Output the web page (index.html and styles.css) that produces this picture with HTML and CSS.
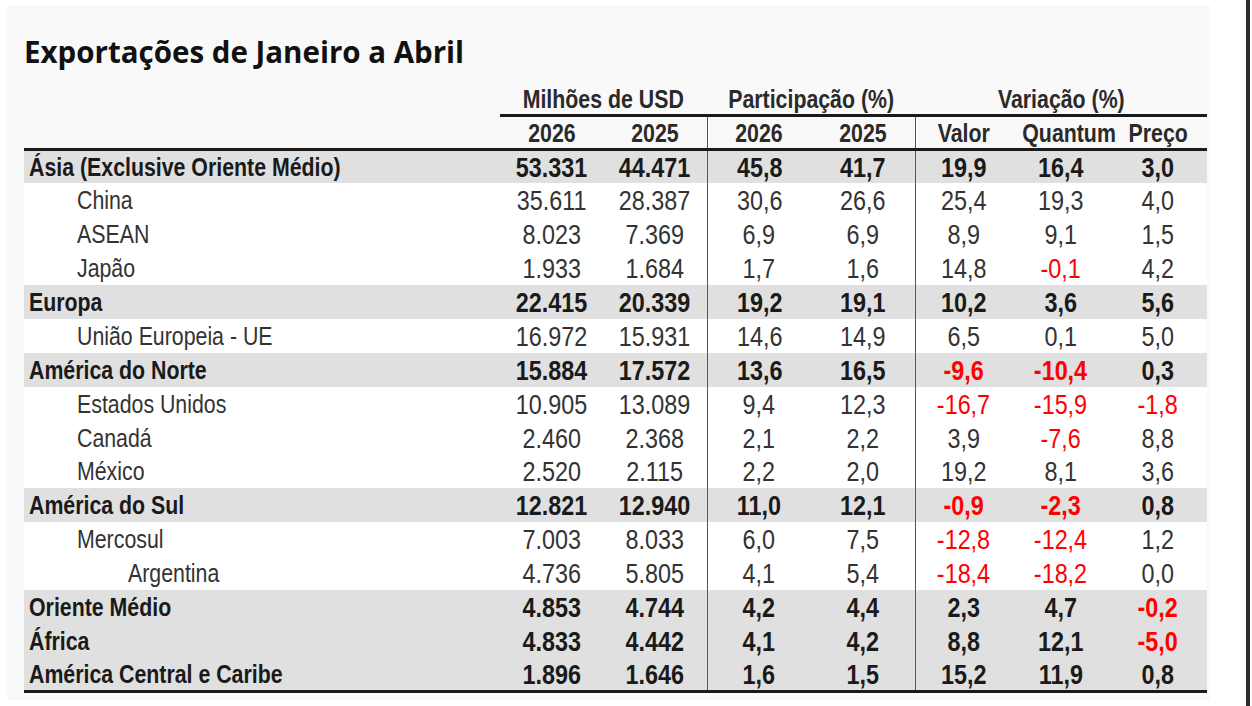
FILE: index.html
```html
<!DOCTYPE html>
<html lang="pt-BR">
<head>
<meta charset="utf-8">
<title>Exportações de Janeiro a Abril</title>
<link rel="stylesheet" href="styles.css">
</head>
<body>
<div class="screen">
  <div class="panel">
    <h1 class="title">Exportações de Janeiro a Abril</h1>
    <table class="data">
      <colgroup>
        <col class="c-label">
        <col class="c-m"><col class="c-m">
        <col class="c-p"><col class="c-p">
        <col class="c-v"><col class="c-v"><col class="c-v3">
      </colgroup>
      <thead>
        <tr class="grp-row">
          <th class="blank"></th>
          <th colspan="2" class="grp"><span>Milhões de USD</span></th>
          <th colspan="2" class="grp"><span>Participação (%)</span></th>
          <th colspan="3" class="grp"><span>Variação (%)</span></th>
        </tr>
        <tr class="sub-row">
          <th class="blank"></th>
          <th><span>2026</span></th><th><span>2025</span></th>
          <th class="sep"><span>2026</span></th><th><span>2025</span></th>
          <th class="sep"><span>Valor</span></th><th><span>Quantum</span></th><th><span>Preço</span></th>
        </tr>
      </thead>
      <tbody>
        <tr class="region"><td class="lbl"><span>Ásia (Exclusive Oriente Médio)</span></td><td><span>53.331</span></td><td><span>44.471</span></td><td class="sep"><span>45,8</span></td><td><span>41,7</span></td><td class="sep"><span>19,9</span></td><td><span>16,4</span></td><td><span>3,0</span></td></tr>
        <tr class="item"><td class="lbl l1"><span>China</span></td><td><span>35.611</span></td><td><span>28.387</span></td><td class="sep"><span>30,6</span></td><td><span>26,6</span></td><td class="sep"><span>25,4</span></td><td><span>19,3</span></td><td><span>4,0</span></td></tr>
        <tr class="item"><td class="lbl l1"><span>ASEAN</span></td><td><span>8.023</span></td><td><span>7.369</span></td><td class="sep"><span>6,9</span></td><td><span>6,9</span></td><td class="sep"><span>8,9</span></td><td><span>9,1</span></td><td><span>1,5</span></td></tr>
        <tr class="item"><td class="lbl l1"><span>Japão</span></td><td><span>1.933</span></td><td><span>1.684</span></td><td class="sep"><span>1,7</span></td><td><span>1,6</span></td><td class="sep"><span>14,8</span></td><td class="neg"><span>-0,1</span></td><td><span>4,2</span></td></tr>
        <tr class="region"><td class="lbl"><span>Europa</span></td><td><span>22.415</span></td><td><span>20.339</span></td><td class="sep"><span>19,2</span></td><td><span>19,1</span></td><td class="sep"><span>10,2</span></td><td><span>3,6</span></td><td><span>5,6</span></td></tr>
        <tr class="item"><td class="lbl l1"><span>União Europeia - UE</span></td><td><span>16.972</span></td><td><span>15.931</span></td><td class="sep"><span>14,6</span></td><td><span>14,9</span></td><td class="sep"><span>6,5</span></td><td><span>0,1</span></td><td><span>5,0</span></td></tr>
        <tr class="region"><td class="lbl"><span>América do Norte</span></td><td><span>15.884</span></td><td><span>17.572</span></td><td class="sep"><span>13,6</span></td><td><span>16,5</span></td><td class="sep neg"><span>-9,6</span></td><td class="neg"><span>-10,4</span></td><td><span>0,3</span></td></tr>
        <tr class="item"><td class="lbl l1"><span>Estados Unidos</span></td><td><span>10.905</span></td><td><span>13.089</span></td><td class="sep"><span>9,4</span></td><td><span>12,3</span></td><td class="sep neg"><span>-16,7</span></td><td class="neg"><span>-15,9</span></td><td class="neg"><span>-1,8</span></td></tr>
        <tr class="item"><td class="lbl l1"><span>Canadá</span></td><td><span>2.460</span></td><td><span>2.368</span></td><td class="sep"><span>2,1</span></td><td><span>2,2</span></td><td class="sep"><span>3,9</span></td><td class="neg"><span>-7,6</span></td><td><span>8,8</span></td></tr>
        <tr class="item"><td class="lbl l1"><span>México</span></td><td><span>2.520</span></td><td><span>2.115</span></td><td class="sep"><span>2,2</span></td><td><span>2,0</span></td><td class="sep"><span>19,2</span></td><td><span>8,1</span></td><td><span>3,6</span></td></tr>
        <tr class="region"><td class="lbl"><span>América do Sul</span></td><td><span>12.821</span></td><td><span>12.940</span></td><td class="sep"><span>11,0</span></td><td><span>12,1</span></td><td class="sep neg"><span>-0,9</span></td><td class="neg"><span>-2,3</span></td><td><span>0,8</span></td></tr>
        <tr class="item"><td class="lbl l1"><span>Mercosul</span></td><td><span>7.003</span></td><td><span>8.033</span></td><td class="sep"><span>6,0</span></td><td><span>7,5</span></td><td class="sep neg"><span>-12,8</span></td><td class="neg"><span>-12,4</span></td><td><span>1,2</span></td></tr>
        <tr class="item"><td class="lbl l2"><span>Argentina</span></td><td><span>4.736</span></td><td><span>5.805</span></td><td class="sep"><span>4,1</span></td><td><span>5,4</span></td><td class="sep neg"><span>-18,4</span></td><td class="neg"><span>-18,2</span></td><td><span>0,0</span></td></tr>
        <tr class="region"><td class="lbl"><span>Oriente Médio</span></td><td><span>4.853</span></td><td><span>4.744</span></td><td class="sep"><span>4,2</span></td><td><span>4,4</span></td><td class="sep"><span>2,3</span></td><td><span>4,7</span></td><td class="neg"><span>-0,2</span></td></tr>
        <tr class="region"><td class="lbl"><span>África</span></td><td><span>4.833</span></td><td><span>4.442</span></td><td class="sep"><span>4,1</span></td><td><span>4,2</span></td><td class="sep"><span>8,8</span></td><td><span>12,1</span></td><td class="neg"><span>-5,0</span></td></tr>
        <tr class="region last"><td class="lbl"><span>América Central e Caribe</span></td><td><span>1.896</span></td><td><span>1.646</span></td><td class="sep"><span>1,6</span></td><td><span>1,5</span></td><td class="sep"><span>15,2</span></td><td><span>11,9</span></td><td><span>0,8</span></td></tr>
      </tbody>
    </table>
  </div>
  <div class="edge"></div>
</div>
</body>
</html>
```

FILE: styles.css
```css
html, body {
  margin: 0;
  padding: 0;
  background: #ffffff;
}

.screen {
  display: flex;
  width: 1252px;
  height: 706px;
  overflow: hidden;
}

.panel {
  margin: 5px 0 6px 7px;
  width: 1203px;
  height: 695px;
  background: #f9f9f9;
  padding-left: 17px;
  box-sizing: border-box;
}

.edge {
  margin-left: 36px;
  width: 4px;
  height: 706px;
  background: #2e2e2e;
}

.title {
  margin: 0;
  padding-top: 27px;
  height: 49px;
  font-family: "Open Sans", "Liberation Sans", sans-serif;
  font-weight: 700;
  font-size: 29.5px;
  line-height: 40px;
  color: #111;
  letter-spacing: 0;
}

.data {
  width: 1183px;
  border-collapse: collapse;
  table-layout: fixed;
  font-family: "Liberation Sans", Arial, sans-serif;
  font-size: 28.5px;
  color: #222;
}

.data span {
  display: inline-block;
  transform: scaleX(0.82);
  transform-origin: center;
}

.c-label { width: 476px; }
.c-m { width: 103.5px; }
.c-p { width: 104px; }
.c-v { width: 97px; }
.c-v3 { width: 98px; }

.data th,
.data td {
  padding: 0;
  text-align: center;
  vertical-align: middle;
  white-space: nowrap;
}

.data th {
  font-weight: 700;
  font-size: 26px;
  color: #2a2a2a;
}

.data .grp-row th {
  height: 29px;
  padding-top: 3px;
  line-height: 30px;
}

.grp-row .grp {
  border-bottom: 3px solid #1a1a1a;
}

.sub-row th {
  height: 31px;
  line-height: 30px;
  border-bottom: 3px solid #1a1a1a;
}

.data .sep {
  border-left: 1px solid #555;
}

.data tbody tr {
  height: 33.9px;
}

.data tbody td {
  line-height: 30px;
  background: #ffffff;
}

.region td {
  background: #e0e0e0 !important;
  font-weight: 700;
  color: #1a1a1a;
}

.item td {
  color: #333;
}

.data .lbl {
  text-align: left;
  padding-left: 5px;
  font-size: 26px;
}

.data .lbl span {
  transform-origin: left center;
}

.data .lbl.l1 { padding-left: 53px; }
.data .lbl.l2 { padding-left: 104px; }

.data .neg {
  color: #ff0000;
}

.region.last td {
  border-bottom: 3px solid #1a1a1a;
}
```
